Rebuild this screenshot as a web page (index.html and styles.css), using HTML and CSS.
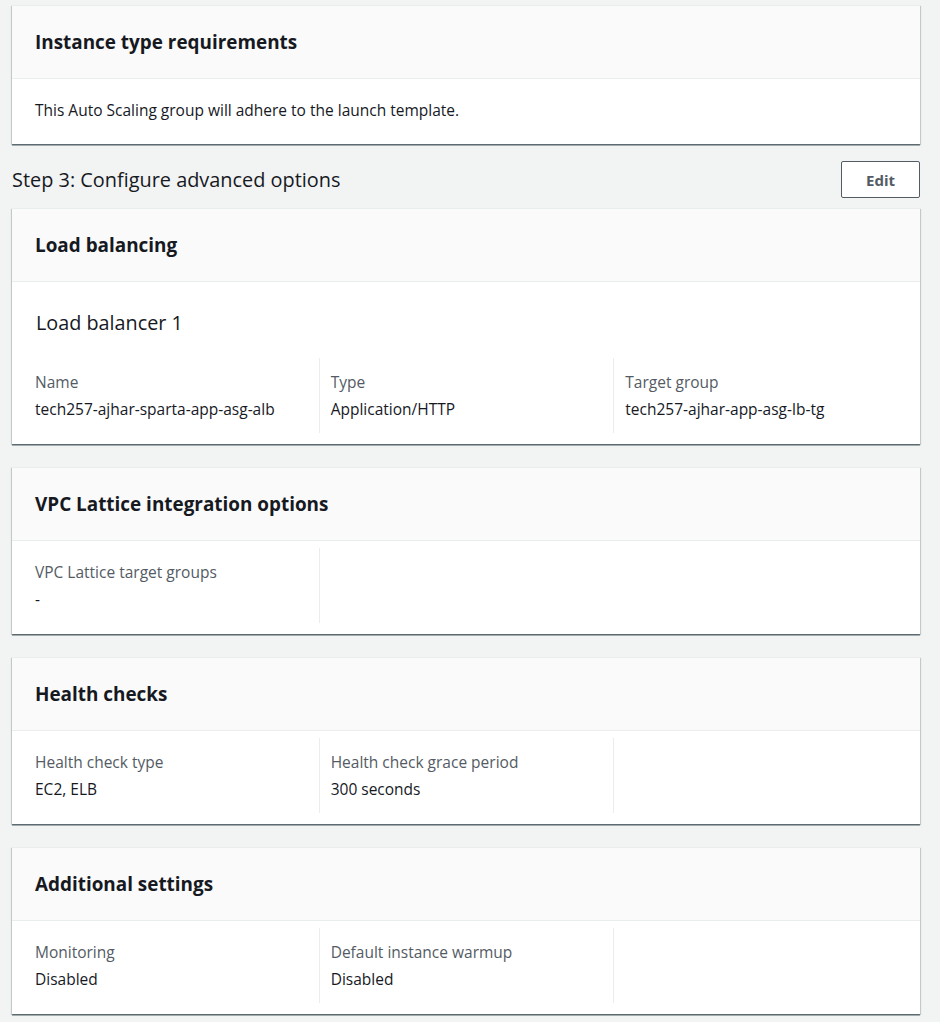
FILE: index.html
```html
<!DOCTYPE html>
<html lang="en">
<head>
<meta charset="utf-8">
<title>Review</title>
<link rel="stylesheet" href="styles.css">
</head>
<body>
<main class="page">
  <section class="card card-first">
    <header class="card-header"><h2>Instance type requirements</h2></header>
    <div class="card-body text-body">This Auto Scaling group will adhere to the launch template.</div>
  </section>

  <div class="step-head">
    <h1>Step 3: Configure advanced options</h1>
    <button class="btn" type="button">Edit</button>
  </div>

  <section class="card">
    <header class="card-header"><h2>Load balancing</h2></header>
    <div class="card-body lb-body">
      <h3 class="sub">Load balancer 1</h3>
      <div class="cols">
        <div class="col"><div class="label">Name</div><div class="value">tech257-ajhar-sparta-app-asg-alb</div></div>
        <div class="col"><div class="label">Type</div><div class="value">Application/HTTP</div></div>
        <div class="col"><div class="label">Target group</div><div class="value">tech257-ajhar-app-asg-lb-tg</div></div>
      </div>
    </div>
  </section>

  <section class="card">
    <header class="card-header"><h2>VPC Lattice integration options</h2></header>
    <div class="card-body">
      <div class="cols">
        <div class="col"><div class="label">VPC Lattice target groups</div><div class="value">-</div></div>
        <div class="col empty"></div>
        <div class="col empty nodiv"></div>
      </div>
    </div>
  </section>

  <section class="card">
    <header class="card-header"><h2>Health checks</h2></header>
    <div class="card-body">
      <div class="cols">
        <div class="col"><div class="label">Health check type</div><div class="value">EC2, ELB</div></div>
        <div class="col"><div class="label">Health check grace period</div><div class="value">300 seconds</div></div>
        <div class="col empty"></div>
      </div>
    </div>
  </section>

  <section class="card">
    <header class="card-header"><h2>Additional settings</h2></header>
    <div class="card-body">
      <div class="cols">
        <div class="col"><div class="label">Monitoring</div><div class="value">Disabled</div></div>
        <div class="col"><div class="label">Default instance warmup</div><div class="value">Disabled</div></div>
        <div class="col empty"></div>
      </div>
    </div>
  </section>
</main>
</body>
</html>
```

FILE: styles.css
```css
* { box-sizing: border-box; }
html, body { margin: 0; padding: 0; }
body {
  background: #f2f3f3;
  font-family: "Open Sans", "Noto Sans", Arial, sans-serif;
  color: #16191f;
  font-size: 15.5px;
}
.page {
  padding: 5px 20px 0 12px;
}
.card {
  background: #fff;
  border-top: 1px solid #eaeded;
  box-shadow: 0 1px 1px 0 rgba(0,28,36,.3), 0 2px 0 0 rgba(0,28,36,.25), 1px 1px 1px 0 rgba(0,28,36,.15), -1px 1px 1px 0 rgba(0,28,36,.15);
  margin-bottom: 23px;
}
.card-header {
  background: #fafafa;
  height: 73px;
  border-bottom: 1px solid #eaeded;
  display: flex;
  align-items: center;
  padding: 0 23px;
}
.card-header h2 {
  margin: 0;
  font-size: 18.9px;
  font-weight: 700;
  line-height: 24px;
  color: #16191f;
}
.card-body {
  padding: 7px 12px 11px;
}
.text-body {
  padding: 21px 23px 24px;
  line-height: 20px;
}
.lb-body { padding-top: 28px; }
.card-first { margin-bottom: 17px; }
.step-head {
  display: flex;
  align-items: center;
  justify-content: space-between;
  margin-bottom: 10px;
}
.step-head h1 {
  margin: 0;
  font-size: 19.9px;
  font-weight: 400;
  line-height: 26px;
  color: #16191f;
}
.btn {
  width: 79px;
  height: 37px;
  background: #fff;
  border: 1px solid #545b64;
  border-radius: 2px;
  font-family: inherit;
  font-size: 15px;
  font-weight: 700;
  color: #545b64;
  padding: 0;
}
.sub {
  margin: 0 12px 22px;
  font-size: 19.8px;
  font-weight: 400;
  line-height: 26px;
  color: #16191f;
}
.cols {
  display: grid;
  grid-template-columns: repeat(3, 1fr);
}
.col {
  padding: 14px 11px;
  min-height: 75px;
}
.col + .col { border-left: 1px solid #eaeded; }
.col.nodiv { border-left: none; }
.label {
  color: #545b64;
  line-height: 20px;
}
.value {
  margin-top: 7px;
  line-height: 20px;
  color: #16191f;
}
```
